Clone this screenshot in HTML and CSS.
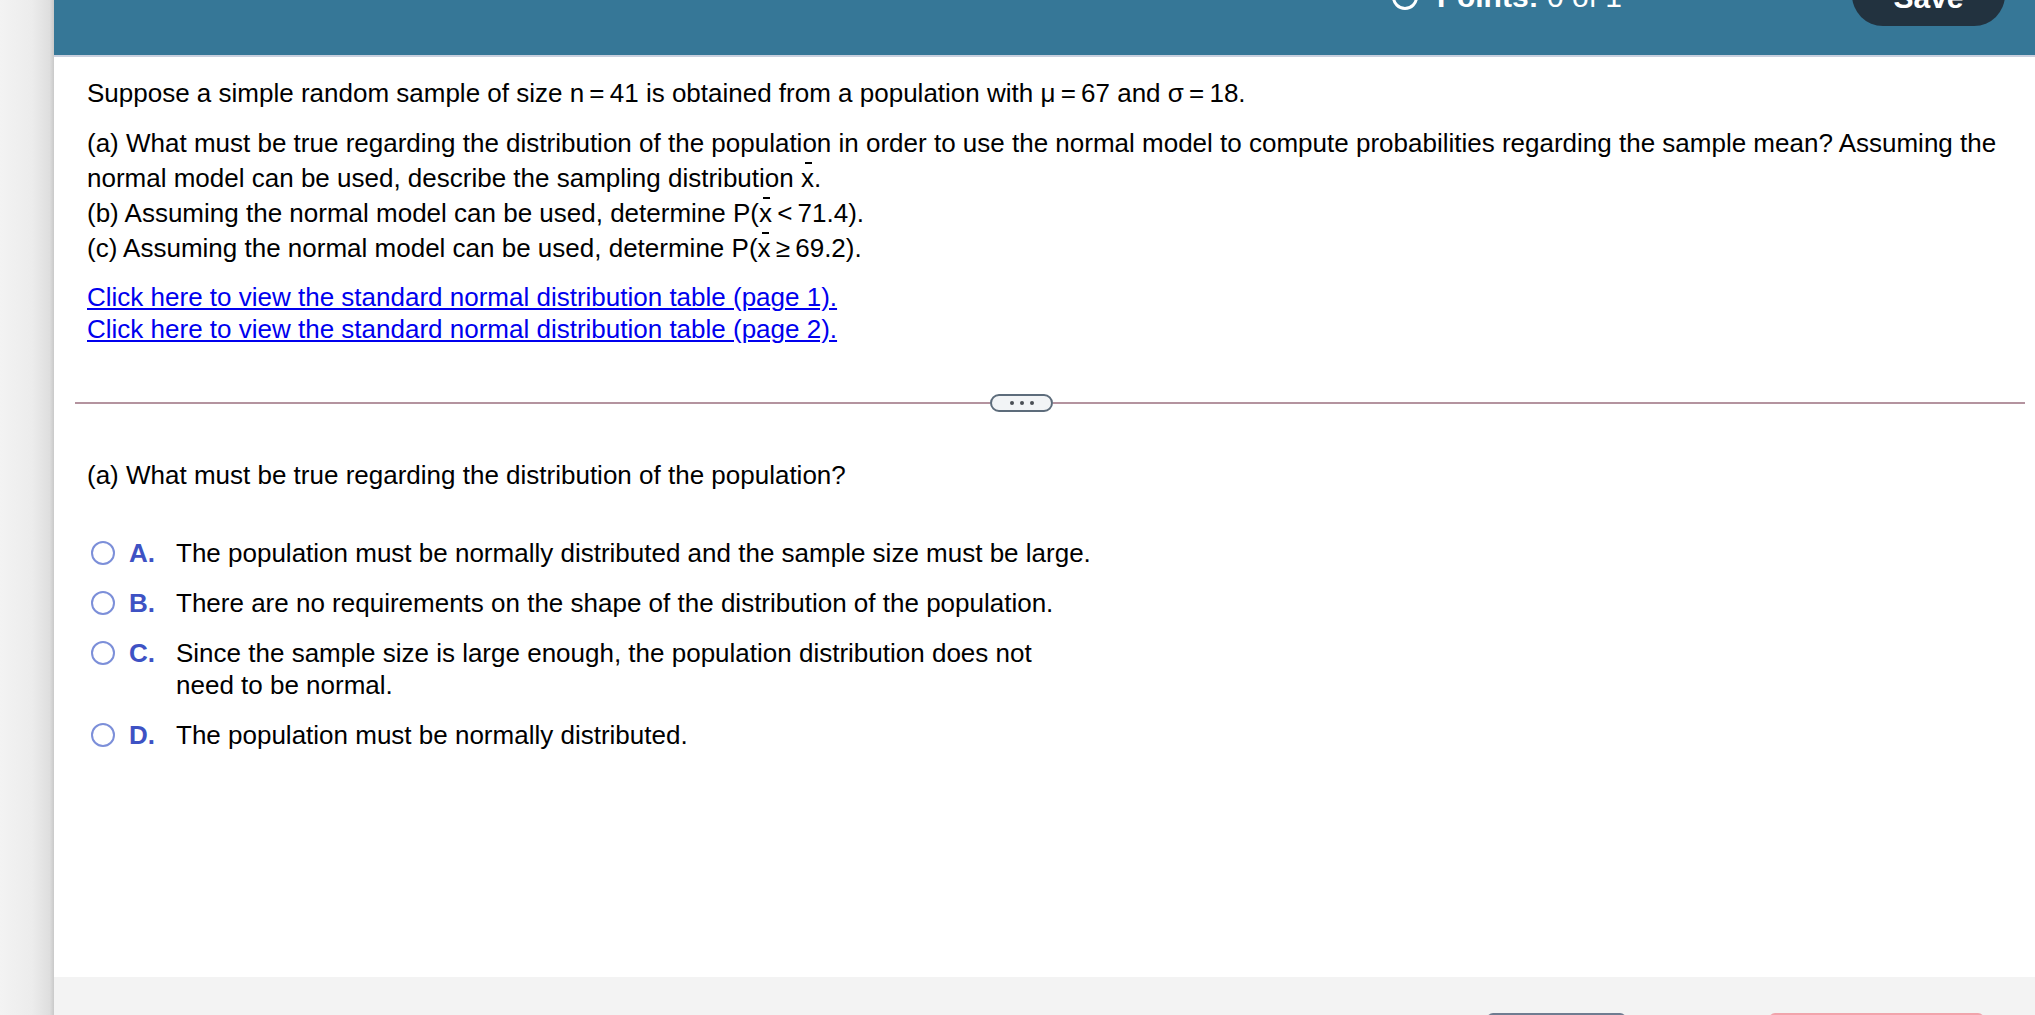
FILE: index.html
```html
<!DOCTYPE html>
<html lang="en">
<head>
<meta charset="utf-8">
<title>Question</title>
<link rel="stylesheet" href="styles.css">
</head>
<body>
<div class="page">
  <div class="rail"></div>
  <div class="main">
    <header class="topbar">
      <div class="points">
        <svg class="points-icon" width="26" height="26" viewBox="0 0 26 26"><circle cx="13" cy="13" r="11.5" fill="none" stroke="#fff" stroke-width="3"/></svg>
        <span class="points-text"><b>Points:</b> 0 of 1</span>
      </div>
      <button class="save">Save</button>
    </header>
    <div class="content">
      <div class="question">
        <p class="intro">Suppose a simple random sample of size n&#8201;=&#8201;41 is obtained from a population with &#956;&#8201;=&#8201;67 and &#963;&#8201;=&#8201;18.</p>
        <p class="parts">(a) What must be true regarding the distribution of the population in order to use the normal model to compute probabilities regarding the sample mean? Assuming the normal model can be used, describe the sampling distribution <span class="xbar">x</span>.<br>(b) Assuming the normal model can be used, determine P(<span class="xbar">x</span>&#8201;&lt;&#8201;71.4).<br>(c) Assuming the normal model can be used, determine P(<span class="xbar">x</span>&#8201;&#8805;&#8201;69.2).</p>
        <p class="links"><a href="#">Click here to view the standard normal distribution table (page 1).</a><br><a href="#">Click here to view the standard normal distribution table (page 2).</a></p>
      </div>
      <div class="divider">
        <span class="rule rule-left"></span>
        <span class="pill"><i></i><i></i><i></i></span>
        <span class="rule rule-right"></span>
      </div>
      <div class="answer">
        <p class="prompt">(a) What must be true regarding the distribution of the population?</p>
        <ul class="options">
          <li class="option"><span class="radio"></span><span class="letter">A.</span><span class="otext">The population must be normally distributed and the sample size must be large.</span></li>
          <li class="option"><span class="radio"></span><span class="letter">B.</span><span class="otext">There are no requirements on the shape of the distribution of the population.</span></li>
          <li class="option"><span class="radio"></span><span class="letter">C.</span><span class="otext">Since the sample size is large enough, the population distribution does not need to be normal.</span></li>
          <li class="option"><span class="radio"></span><span class="letter">D.</span><span class="otext">The population must be normally distributed.</span></li>
        </ul>
      </div>
    </div>
    <footer class="footer">
      <span class="fbtn fbtn-back"></span>
      <span class="fbtn fbtn-next"></span>
    </footer>
  </div>
</div>
</body>
</html>
```
FILE: styles.css
```css
* { box-sizing: border-box; }
html, body { margin: 0; padding: 0; }
body {
  font-family: "Liberation Sans", Arial, Helvetica, sans-serif;
  font-size: 26px;
  color: #000;
  background: #fff;
}
.page {
  display: flex;
  height: 100vh;
  overflow: hidden;
}
.rail {
  width: 54px;
  flex: 0 0 54px;
  background: linear-gradient(to right, #f3f3f3 0%, #ececec 60%, #dedede 92%, #c9c9c9 100%);
}
.main {
  flex: 1;
  display: flex;
  flex-direction: column;
  min-width: 0;
}
.topbar {
  flex: 0 0 57px;
  height: 57px;
  background: #367797;
  border-bottom: 2px solid #c9d0de;
  display: flex;
  justify-content: flex-end;
  align-items: flex-start;
  padding-right: 30px;
}
.points {
  display: flex;
  align-items: center;
  gap: 19px;
  height: 26px;
  margin-top: -16px;
  margin-right: 230px;
  color: #fff;
  font-size: 30px;
  line-height: 26px;
}
.points-icon { display: block; }
.points-text b { font-weight: bold; }
.save {
  width: 153px;
  height: 62px;
  margin-top: -36px;
  border: 0;
  border-radius: 31px;
  background: #22323f;
  color: #fff;
  font-family: inherit;
  font-size: 30px;
  font-weight: bold;
  padding-top: 6px;
}
.content {
  flex: 1;
  background: #fff;
  padding: 19px 10px 0 21px;
}
.question, .answer { padding-left: 12px; }
p { margin: 0; }
.intro { line-height: 35px; }
.parts { line-height: 35px; margin-top: 15px; }
.links { line-height: 32px; margin-top: 15px; }
.links a { color: #0000ee; text-decoration: underline; }
.xbar { position: relative; }
.xbar::before {
  content: "";
  position: absolute;
  left: 4px;
  width: 7px;
  height: 2px;
  top: -1px;
  background: #000;
}
.divider {
  display: flex;
  align-items: center;
  margin-top: 49px;
  height: 18px;
}
.rule { height: 2px; background: #b4939f; }
.rule-left { flex: 0 0 915px; }
.rule-right { flex: 0 0 972px; }
.pill {
  flex: 0 0 63px;
  height: 18px;
  border: 2px solid #5d6c7b;
  border-radius: 9px;
  background: #f2f4f6;
  display: flex;
  justify-content: center;
  align-items: center;
  gap: 6px;
}
.pill i {
  width: 4px;
  height: 4px;
  border-radius: 50%;
  background: #4b4f55;
}
.prompt { line-height: 35px; margin-top: 46px; }
.options {
  list-style: none;
  margin: 44px 0 0 0;
  padding: 0;
  display: flex;
  flex-direction: column;
  gap: 18px;
}
.option {
  display: flex;
  align-items: flex-start;
  line-height: 32px;
  padding-left: 4px;
}
.radio {
  flex: 0 0 24px;
  width: 24px;
  height: 24px;
  margin-top: 4px;
  border: 2.5px solid #7c8fd9;
  border-radius: 50%;
  background: #fff;
}
.letter {
  flex: 0 0 47px;
  margin-left: 14px;
  font-weight: bold;
  color: #3e52c4;
}
.otext { max-width: 918px; }
.footer {
  flex: 0 0 38px;
  height: 38px;
  background: #f3f3f3;
  display: flex;
  align-items: flex-start;
  padding-top: 36px;
  overflow: hidden;
}
.fbtn {
  display: block;
  height: 30px;
  border-radius: 6px 6px 0 0;
}
.fbtn-back { width: 139px; margin-left: 1433px; background: #6f7c91; }
.fbtn-next { width: 215px; margin-left: 143px; background: #f2a3ab; }
```
